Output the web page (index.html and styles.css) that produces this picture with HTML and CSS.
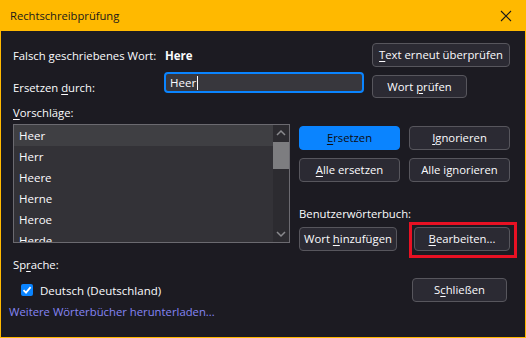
FILE: index.html
```html
<!DOCTYPE html>
<html lang="de">
  <head>
    <meta charset="UTF-8" />
    <title>Rechtschreibprüfung</title>
    <link rel="stylesheet" href="styles.css">
  </head>
  <body>
    <div class="window">
      <div class="titlebar">
        <span class="title">Rechtschreibprüfung</span>
        <svg class="close" width="12" height="12" viewBox="0 0 12 12">
          <path d="M1 1 L11 11 M11 1 L1 11" stroke="#1a1a1a" stroke-width="1.1" fill="none" />
        </svg>
      </div>
      <div class="content">
        <div class="row-top">
          <span class="label-col">Falsch geschriebenes Wort:</span>
          <b class="word">Here</b>
          <button class="btn btn-recheck"><u>T</u>ext erneut überprüfen</button>
        </div>

        <div class="row-replace">
          <label class="label-col label-replace">Ersetzen <u>d</u>urch:</label>
          <div class="input">Heer<span class="caret"></span></div>
          <button class="btn btn-check">Wort <u>p</u>rüfen</button>
        </div>

        <div class="section-label"><u>V</u>orschläge:</div>

        <div class="main">
          <div class="listbox">
            <div class="items">
              <div class="item selected">Heer</div>
              <div class="item">Herr</div>
              <div class="item">Heere</div>
              <div class="item">Herne</div>
              <div class="item">Heroe</div>
              <div class="item">Herde</div>
            </div>
            <div class="scrollbar">
              <svg class="arrow" width="16" height="17" viewBox="0 0 16 17">
                <polyline points="4,10 8,6 12,10" stroke="#8a8a8e" stroke-width="1.5" fill="none" />
              </svg>
              <div class="track"><div class="thumb"></div></div>
              <svg class="arrow" width="16" height="17" viewBox="0 0 16 17">
                <polyline points="4,7 8,11 12,7" stroke="#8a8a8e" stroke-width="1.5" fill="none" />
              </svg>
            </div>
          </div>

          <div class="side">
            <div class="btn-grid">
              <button class="btn btn-primary"><u>E</u>rsetzen</button>
              <button class="btn"><u>I</u>gnorieren</button>
              <button class="btn"><u>A</u>lle ersetzen</button>
              <button class="btn">Alle ignorieren</button>
            </div>
            <div class="dict-label">Benutzerwörterbuch:</div>
            <div class="dict-row">
              <button class="btn btn-add">Wort <u>h</u>inzufügen</button>
              <span class="highlight">
                <button class="btn btn-edit"><u>B</u>earbeiten...</button>
              </span>
            </div>
          </div>
        </div>

        <div class="lang-label">Sp<u>r</u>ache:</div>
        <div class="row-lang">
          <span class="checkbox">
            <svg width="12" height="12" viewBox="0 0 12 12">
              <polyline points="2.5,6.2 5,8.6 9.6,3.2" stroke="#fff" stroke-width="1.8" fill="none" />
            </svg>
          </span>
          <span class="lang-name">Deutsch (Deutschland)</span>
          <button class="btn btn-close">S<u>c</u>hließen</button>
        </div>
        <a class="more" href="#">Weitere Wörterbücher herunterladen...</a>
      </div>
    </div>
  </body>
</html>
```

FILE: styles.css
```css
* {
  box-sizing: border-box;
}
body {
  margin: 0;
  width: 526px;
  height: 338px;
  background-color: #1c1b22;
  font-family: "Open Sans", "Noto Sans", sans-serif;
  font-size: 11.3px;
  color: #fbfbfe;
  overflow: hidden;
}
u {
  text-decoration-thickness: 1px;
  text-underline-offset: 2px;
}
.window {
  height: 338px;
  display: flex;
  flex-direction: column;
}
.titlebar {
  height: 31px;
  background-color: #ffb900;
  display: flex;
  align-items: center;
  justify-content: space-between;
  padding: 0 14px 0 10px;
  color: #1a1a1a;
  font-size: 11.2px;
}
.close {
  margin-top: 1px;
}
.content {
  flex: 1;
  border: 1px solid #ffb900;
  border-top: none;
  padding: 0 15px 0 12px;
  display: flex;
  flex-direction: column;
}
.btn {
  font-family: inherit;
  font-size: 11.3px;
  color: #fbfbfe;
  background-color: #2b2a33;
  border: 1px solid #57565d;
  border-radius: 4px;
  height: 24px;
  padding: 0 2px;
  line-height: 20px;
  white-space: nowrap;
}
.btn-primary {
  background-color: #0a84ff;
  border-color: #0a84ff;
  color: #0d0d12;
}
.label-col {
  width: 151px;
  flex-shrink: 0;
}
.row-top {
  display: flex;
  align-items: center;
  margin-top: 12px;
  height: 24px;
}
.word {
  font-weight: bold;
  font-size: 11.5px;
  margin-left: 1px;
}
.btn-recheck {
  margin-left: auto;
  width: 138px;
}
.row-replace {
  display: flex;
  align-items: flex-start;
  margin-top: 5px;
}
.label-replace {
  padding-top: 8px;
  line-height: 16px;
}
.input {
  width: 200px;
  height: 21px;
  border: 2px solid #0a84ff;
  border-radius: 4px;
  background-color: #38373d;
  padding: 0 4px;
  line-height: 17px;
  font-size: 11.5px;
  display: flex;
  align-items: center;
}
.caret {
  width: 1px;
  height: 14px;
  background-color: #fbfbfe;
  margin-left: 1px;
}
.btn-check {
  margin-left: 8px;
  margin-top: 3px;
  width: 95px;
  height: 23px;
}
.section-label {
  margin-top: 7px;
  line-height: 16px;
}
.main {
  display: grid;
  grid-template-columns: 277px 1fr;
  column-gap: 9px;
  margin-top: 3px;
}
.listbox {
  height: 119px;
  border: 1px solid #6b6a70;
  background-color: #333237;
  display: flex;
}
.items {
  flex: 1;
  overflow: hidden;
}
.item {
  height: 21px;
  line-height: 21px;
  padding-left: 5px;
  font-size: 11.5px;
}
.selected {
  background-color: #3f3f43;
}
.scrollbar {
  width: 16px;
  background-color: #2c2b30;
  display: flex;
  flex-direction: column;
}
.track {
  flex: 1;
}
.thumb {
  height: 27px;
  background-color: #7d7d80;
}
.side {
  display: flex;
  flex-direction: column;
}
.btn-grid {
  display: grid;
  grid-template-columns: 1fr 1fr;
  gap: 8px 9px;
  margin-top: 2px;
}
.dict-label {
  margin-top: 24px;
  line-height: 16px;
}
.dict-row {
  display: flex;
  justify-content: space-between;
  margin-top: 5px;
}
.btn-add {
  width: 98px;
}
.highlight {
  position: relative;
  display: flex;
}
.highlight::after {
  content: "";
  position: absolute;
  inset: -5px -7px -7px -5px;
  border: 3px solid #e81123;
}
.btn-edit {
  width: 96px;
}
.lang-label {
  margin-top: 6px;
  line-height: 16px;
}
.row-lang {
  display: flex;
  align-items: center;
  height: 24px;
  margin-top: 5px;
}
.checkbox {
  margin-left: 8px;
  width: 12px;
  height: 12px;
  border-radius: 2px;
  background-color: #0a84ff;
  display: flex;
}
.lang-name {
  margin-left: 7px;
  font-size: 11.5px;
}
.btn-close {
  margin-left: auto;
  margin-right: 3px;
  width: 95px;
}
.more {
  margin-top: 2px;
  margin-left: -4px;
  line-height: 16px;
  color: #8585f5;
  text-decoration: none;
}
```
